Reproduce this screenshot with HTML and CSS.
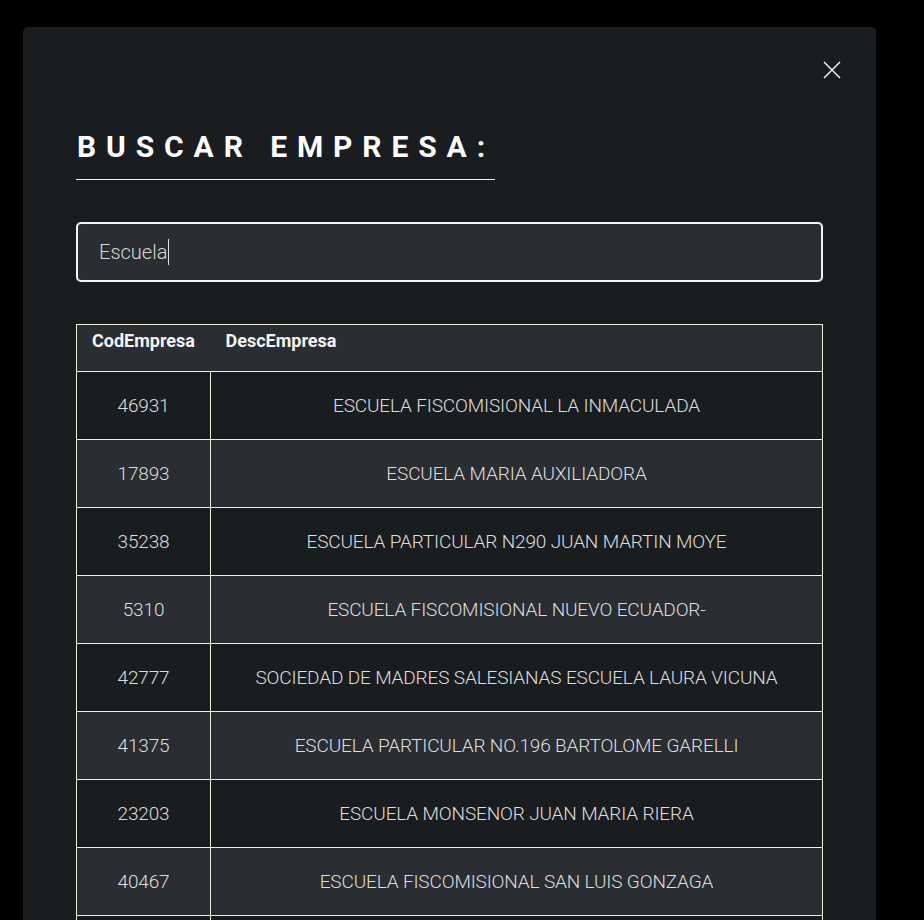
FILE: index.html
```html
<!DOCTYPE html>
<html lang="es">
<head>
<meta charset="utf-8">
<title>Buscar Empresa</title>
<link rel="stylesheet" href="styles.css">
</head>
<body>
<div class="modal">
  <div class="modal-top">
    <button class="close" aria-label="Cerrar">
      <svg width="18" height="18" viewBox="0 0 18 18"><path d="M1 1L17 17M17 1L1 17" stroke="#ffffff" stroke-width="1.4" fill="none"/></svg>
    </button>
  </div>
  <h2 class="title">BUSCAR EMPRESA:</h2>
  <div class="search"><span class="search-text">Escuela</span><span class="caret"></span></div>
  <table class="results">
    <thead>
      <tr><th class="col-cod">CodEmpresa</th><th>DescEmpresa</th></tr>
    </thead>
    <tbody>
      <tr><td>46931</td><td>ESCUELA FISCOMISIONAL LA INMACULADA</td></tr>
      <tr><td>17893</td><td>ESCUELA MARIA AUXILIADORA</td></tr>
      <tr><td>35238</td><td>ESCUELA PARTICULAR N290 JUAN MARTIN MOYE</td></tr>
      <tr><td>5310</td><td>ESCUELA FISCOMISIONAL NUEVO ECUADOR-</td></tr>
      <tr><td>42777</td><td>SOCIEDAD DE MADRES SALESIANAS ESCUELA LAURA VICUNA</td></tr>
      <tr><td>41375</td><td>ESCUELA PARTICULAR NO.196 BARTOLOME GARELLI</td></tr>
      <tr><td>23203</td><td>ESCUELA MONSENOR JUAN MARIA RIERA</td></tr>
      <tr><td>40467</td><td>ESCUELA FISCOMISIONAL SAN LUIS GONZAGA</td></tr>
      <tr><td></td><td></td></tr>
    </tbody>
  </table>
</div>
</body>
</html>
```
FILE: styles.css
```css
html, body {
  margin: 0;
  padding: 0;
  background: #000000;
  height: 920px;
  overflow: hidden;
}
body {
  padding: 27px 48px 0 23px;
  font-family: "Roboto", "Liberation Sans", sans-serif;
}
.modal {
  width: 853px;
  box-sizing: border-box;
  background: #1a1d20;
  border-radius: 5px;
  padding: 34px 53px 40px 53px;
  min-height: 1000px;
}
.modal-top {
  display: flex;
  justify-content: flex-end;
  margin-right: -18px;
}
.close {
  background: none;
  border: 0;
  padding: 0;
  width: 18px;
  height: 18px;
  cursor: pointer;
  display: block;
}
.close svg { display: block; }
.title {
  display: inline-block;
  margin: 50px 0 0 0;
  padding: 0 0 14px 1px;
  border-bottom: 1px solid #f2f2f2;
  color: #ffffff;
  font-size: 30px;
  font-weight: 700;
  letter-spacing: 9.9px;
  line-height: 36px;
}
.search {
  margin-top: 42px;
  height: 60px;
  box-sizing: border-box;
  border: 2px solid #f4f4f4;
  border-radius: 5px;
  background: #2a2d31;
  display: flex;
  align-items: center;
  padding-left: 21px;
  color: #d6d6d6;
  font-size: 20px;
  font-weight: 300;
}
.caret {
  display: inline-block;
  width: 1px;
  height: 26px;
  background: #e0e0e0;
  margin-left: 1px;
}
.results {
  margin-top: 42px;
  width: 100%;
  border-collapse: collapse;
  border: 1px solid #f2eedb;
  color: #dcdcdc;
}
.results th {
  background: #2a2d31;
  text-align: left;
  color: #f4f4f4;
  font-weight: 700;
  font-size: 18px;
  height: 47px;
  padding: 5px 15px 0 15px;
  box-sizing: border-box;
  vertical-align: top;
  border-bottom: 1px solid #f2eedb;
}
.results th.col-cod { width: 134px; }
.results td {
  height: 68px;
  box-sizing: border-box;
  padding: 0 10px;
  border: 1px solid #f2eedb;
  text-align: center;
  font-size: 19px;
  font-weight: 300;
  letter-spacing: -0.15px;
  color: #dedede;
}
.results tbody tr:nth-child(even) td { background: #2a2d31; }
.results tbody tr:nth-child(odd) td { background: #1a1d20; }
```
